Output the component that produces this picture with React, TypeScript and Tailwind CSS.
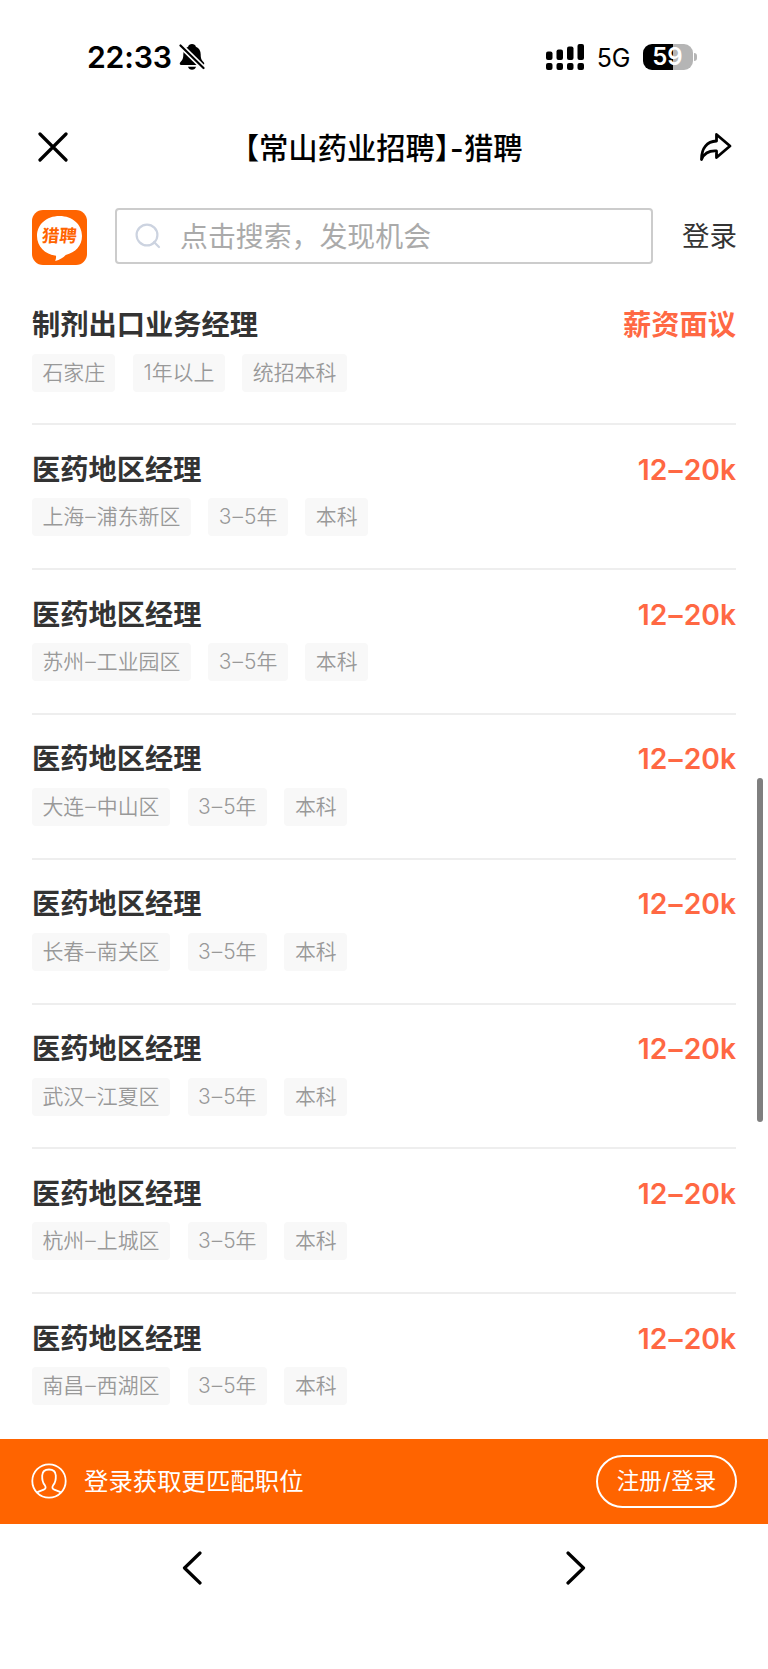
import React from "react";

type Job = { title: string; salary: string; tags: string[] };

const manager = (place: string): Job => ({
  title: "医药地区经理",
  salary: "12–20k",
  tags: [place, "3–5年", "本科"],
});

const jobs: Job[] = [
  { title: "制剂出口业务经理", salary: "薪资面议", tags: ["石家庄", "1年以上", "统招本科"] },
  manager("上海–浦东新区"),
  manager("苏州–工业园区"),
  manager("大连–中山区"),
  manager("长春–南关区"),
  manager("武汉–江夏区"),
  manager("杭州–上城区"),
  manager("南昌–西湖区"),
];

/** Sets a little air on both sides of every en dash. */
function Dashed({ text }: { text: string }) {
  return (
    <>
      {text.split("–").map((part, i) => (
        <React.Fragment key={i}>
          {i > 0 && <span className="px-[1.1px]">–</span>}
          {part}
        </React.Fragment>
      ))}
    </>
  );
}

function MutedBell() {
  return (
    <svg className="ml-[7px] h-[28px] w-[26px] shrink-0" viewBox="0 0 26 28">
      <path
        d="M13 1c-2 0-3.500 1.100-3.900 2.700C5.800 5 4.300 8 4.300 11.500c0 4-.8 5.400-2.800 7.500C.2 20.500.6 22 2.300 22h21.400c1.700 0 2.100-1.500.8-3-2-2.100-2.800-3.500-2.800-7.500 0-3.500-1.500-6.500-4.800-7.800C16.500 2.100 15 1 13 1Z"
        fill="#000"
      />
      <path d="M9 23.800h8c-.5 1.900-2 3-4 3s-3.500-1.100-4-3Z" fill="#000" />
      <path d="M1 2 25 25.500" stroke="#fff" strokeWidth="5.400" />
      <path d="M1.500 2.500 24.500 25" stroke="#000" strokeWidth="2.200" strokeLinecap="round" />
    </svg>
  );
}

function Signal() {
  const tops = [7.5, 5.5, 2.5, 0];
  return (
    <svg className="h-[26px] w-[38px]" viewBox="0 0 38 26">
      {tops.map((t, i) => (
        <g key={i}>
          <rect x={i * 10.5} y={t} width="6.500" height={16 - t} rx="2" />
          <rect x={i * 10.5} y="19" width="6.500" height="7" rx="2" />
        </g>
      ))}
    </svg>
  );
}

function StatusBar() {
  return (
    <div className="flex h-[113px] items-start justify-between pt-[43px] pr-[71px] pl-[87px] text-black">
      <div className="flex items-center">
        <span className="h-[28px] text-[30.2px] leading-[28px] font-semibold tracking-[-0.2px]">22:33</span>
        <MutedBell />
      </div>
      <div className="flex h-[27px] items-center">
        <Signal />
        <span className="ml-[13px] pt-[2px] text-[25px] leading-[26px]">5G</span>
        <div className="ml-[12px] flex h-[26px] w-[50px] items-center justify-center rounded-[9px] bg-[linear-gradient(to_right,#000_59%,#b5b5b5_59%)] text-[24px] leading-none font-semibold text-white">
          59
        </div>
        <div className="ml-[1.5px] h-[8px] w-[3px] rounded-r-full bg-[#b5b5b5]" />
      </div>
    </div>
  );
}

function NavBar() {
  return (
    <div className="flex h-[70px] items-center justify-between pr-[36px] pl-[38px]">
      <svg className="mb-[2px] h-[30px] w-[30px]" viewBox="0 0 30 30" stroke="#000" strokeWidth="3.200" strokeLinecap="round">
        <path d="M2 2 28 28M28 2 2 28" />
      </svg>
      <h1 className="flex pt-px text-[29.3px] leading-[40px] font-medium whitespace-nowrap text-black">
        <span className="[font-feature-settings:'halt']">【常山药业招聘】</span>
        <span className="w-[14.5px] text-center font-semibold">-</span>
        <span>猎聘</span>
      </h1>
      <svg className="mb-[2px] h-[30px] w-[33px]" viewBox="0 0 33 30" fill="none" stroke="#000" strokeWidth="2.800" strokeLinejoin="round">
        <path d="M17.500 2.500 31 14 17.500 25.500V19C10 18.500 5 21.500 2.500 27.500 2.500 16 8 9.500 17.500 9Z" />
      </svg>
    </div>
  );
}

function Logo() {
  return (
    <div className="relative h-[55px] w-[55px] shrink-0">
      <svg className="h-full w-full" viewBox="0 0 55 55">
        <rect width="55" height="55" rx="11" fill="#ff6400" />
        <path
          d="M27.500 6C14.500 6 5 14.500 5 26c0 10.500 8 18.500 19 19.700.2 2.300-.2 3.800-.8 5.200 4.500-1 8-3.200 10.500-5.900C43.500 42.500 50 35.500 50 26 50 14.500 40.500 6 27.500 6Z"
          fill="#fff"
        />
      </svg>
      <span className="absolute top-[14px] left-[10px] -skew-x-6 text-[17.5px] leading-[24px] font-bold whitespace-nowrap text-[#ff6400]">
        猎聘
      </span>
    </div>
  );
}

function SearchHeader() {
  return (
    <div className="flex h-[97.5px] items-start pt-[25px] pr-[31px] pl-[32px]">
      <div className="pt-[2px]">
        <Logo />
      </div>
      <div className="ml-[28px] flex h-[56px] w-[538px] items-center rounded-[4px] border-2 border-[#ccc] pl-[18px]">
        <svg className="h-[26px] w-[26px]" viewBox="0 0 26 26" fill="none" stroke="#ccd3e0" strokeWidth="2.200">
          <circle cx="12" cy="12" r="10.400" />
          <path d="m19 19 5 5" strokeLinecap="round" />
        </svg>
        <span className="ml-[19px] pt-px text-[27.9px] leading-[40px] text-[#aaa]">点击搜索，发现机会</span>
      </div>
      <span className="ml-auto text-[27.5px] leading-[56px] text-[#333]">登录</span>
    </div>
  );
}

function JobRow({ job, last }: { job: Job; last: boolean }) {
  return (
    <li className={last ? "h-[145px]" : "h-[144.84px] border-b-2 border-[#eee]"}>
      <div className="flex h-[73px] items-start justify-between pt-[23.5px] text-[28.25px] leading-[42px] font-bold">
        <h2 className="text-[#333]">{job.title}</h2>
        <span className="font-semibold text-[#ff6843]">
          <Dashed text={job.salary} />
        </span>
      </div>
      <div className="flex gap-[17.6px]">
        {job.tags.map((tag) => (
          <span
            key={tag}
            className="h-[38px] rounded-[4px] bg-[#f8f8f8] px-[10.4px] text-[20.9px] leading-[38px] font-[350] whitespace-nowrap text-[#999]"
          >
            <Dashed text={tag} />
          </span>
        ))}
      </div>
    </li>
  );
}

function LoginBar() {
  return (
    <div className="flex h-[85.5px] shrink-0 items-center bg-[#ff6400] pr-[31px] pl-[31px] text-white">
      <svg className="h-[36px] w-[36px]" viewBox="0 0 36 36" fill="none" stroke="#fff" strokeWidth="1.800">
        <circle cx="18" cy="18" r="16.700" />
        <path d="M6 29.500c2-1.500 5-2 7.500-3.300 1.500-.8 1.300-2.600.3-4C11.500 19.500 11 16.500 11.200 12.500 11.400 8.700 14 6.500 18 6.500s6.600 2.200 6.800 6c.2 4-.3 7-2.600 9.700-1 1.400-1.200 3.200.3 4 2.500 1.300 5.500 1.800 7.500 3.300" />
      </svg>
      <span className="ml-[17px] pb-px text-[24.4px] leading-[36px]">登录获取更匹配职位</span>
      <button className="ml-auto h-[53px] w-[141px] rounded-full border-2 border-white text-[22.5px] leading-[48px] whitespace-nowrap">
        注册<span className="px-[0.7px]">/</span>登录
      </button>
    </div>
  );
}

function BottomNav() {
  return (
    <div className="flex h-[145px] shrink-0 items-start justify-around bg-white pt-[26.5px]">
      <svg className="h-[34px] w-[20px]" viewBox="0 0 20 34" fill="none" stroke="#000" strokeWidth="3.200" strokeLinecap="round" strokeLinejoin="round">
        <path d="M18 2 2.500 17l15.500 15" />
      </svg>
      <svg className="h-[34px] w-[20px]" viewBox="0 0 20 34" fill="none" stroke="#000" strokeWidth="3.200" strokeLinecap="round" strokeLinejoin="round">
        <path d="m2 2 15.500 15-15.500 15" />
      </svg>
    </div>
  );
}

export default function App() {
  return (
    <div
      lang="zh-CN"
      className="relative flex h-[1669px] w-[768px] flex-col overflow-hidden bg-white font-['Inter','Noto_Sans_CJK_SC',sans-serif]"
    >
      <StatusBar />
      <NavBar />
      <SearchHeader />
      <ul className="min-h-0 flex-1 overflow-hidden px-[32px]">
        {jobs.map((job, i) => (
          <JobRow key={i} job={job} last={i === jobs.length - 1} />
        ))}
      </ul>
      <LoginBar />
      <BottomNav />
      <div className="absolute top-[778px] right-[5px] h-[344px] w-[6px] rounded-full bg-[#7f7f7f]" />
    </div>
  );
}
